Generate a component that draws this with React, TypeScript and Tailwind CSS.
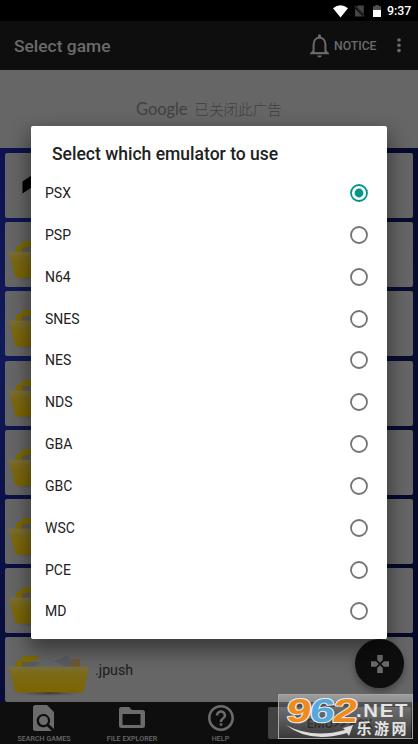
const systems = ['PSX', 'PSP', 'N64', 'SNES', 'NES', 'NDS', 'GBA', 'GBC', 'WSC', 'PCE', 'MD'];

const rows = ['up', '', '', '', '', '', '', '.jpush'];

function StatusBar() {
  return (
    <div className="flex h-[21px] items-center justify-end bg-black pr-[7px] pt-[1px] text-white">
      <svg className="h-[13px] w-[15px]" viewBox="0 0 15 13">
        <path d="M0 3.2Q7.5-2.5 15 3.2L7.5 12.5Z" fill="#fff" />
      </svg>
      <svg className="ml-[6px] h-[12px] w-[11px]" viewBox="0 0 11 12">
        <path d="M4 .5H9.8V9L2.6 1.8ZM1 3.5L9 11.5H1Z" fill="#454545" />
        <path d="M.3 .5L10.7 11.5" stroke="#454545" strokeWidth="1" />
      </svg>
      <svg className="ml-[8px] h-[12px] w-[8px]" viewBox="0 0 8 12">
        <path d="M2.3 0h3.4v1.2H8V5H0V1.2h2.3Z" fill="#505050" />
        <path d="M0 5h8v7H0Z" fill="#fff" />
      </svg>
      <span className="ml-[6.5px] w-[24px] whitespace-nowrap text-[12.4px] font-medium leading-none">9:37</span>
    </div>
  );
}

function AppBar() {
  return (
    <header className="flex h-[49px] items-center bg-[#0e0e0e] pl-[14px] pr-[17px] text-[#6b6b6b]">
      <h1 className="flex-1 pt-[2px] text-[17.4px] font-medium leading-none">Select game</h1>
      <svg className="mr-[1px] h-[24px] w-[19px]" viewBox="0 0 19 24">
        <path d="M3.6 18V10.5C3.6 6.5 6 3.7 9.5 3.7s5.9 2.8 5.9 6.8V18" fill="none" stroke="#6b6b6b" strokeWidth="2" />
        <path d="M8 1.8a1.5 1.5 0 0 1 3 0V4H8ZM0 20.2v-1l2.8-2.7h13.4L19 19.2v1ZM7.3 21.4h4.4a2.2 2 0 0 1-4.4 0Z" fill="#6b6b6b" />
        <path d="M4.6 16h9.8v2.1H4.6Z" fill="#0e0e0e" />
      </svg>
      <span className="ml-[4px] w-[43px] whitespace-nowrap pt-[1px] text-[12.2px] font-medium leading-none">NOTICE</span>
      <svg className="ml-[20px] h-[15px] w-[4px]" viewBox="0 0 4 15">
        <circle cx="2" cy="2" r="1.8" fill="#6b6b6b" />
        <circle cx="2" cy="7.3" r="1.8" fill="#6b6b6b" />
        <circle cx="2" cy="12.6" r="1.8" fill="#6b6b6b" />
      </svg>
    </header>
  );
}

function Folder() {
  return (
    <svg className="mb-[3px] h-[44px] w-[82px] self-end" viewBox="0 0 82 44">
      <defs>
        <linearGradient id="front" x1="0" y1="0" x2="0" y2="1">
          <stop offset="0" stopColor="#7c703c" />
          <stop offset=".3" stopColor="#7b6a16" />
          <stop offset="1" stopColor="#7c6500" />
        </linearGradient>
        <radialGradient id="ground">
          <stop offset="0" stopColor="#292929" />
          <stop offset="1" stopColor="#666" stopOpacity="0" />
        </radialGradient>
      </defs>
      <ellipse cx="40" cy="37.5" rx="38" ry="4.5" fill="url(#ground)" />
      <path d="M7 12V6l5-1 2-4h14l2 4h-8v7Z" fill="#7c6b04" />
      <path d="M13 7h17v5H13Z" fill="#625c46" />
      <path d="M62 4h9v8h-9Z" fill="#6e5a34" />
      <path d="M13 12L22 7l16 2L59 0l5 12Z" fill="#595d62" />
      <path d="M29 9l12-5 16 8H25Z" fill="#62666b" />
      <path d="M0 11.5l8 .3h62l10-.3-5 24q-.7 2-3 2H8.5q-2 0-2.7-2Z" fill="url(#front)" />
    </svg>
  );
}

function GameList() {
  return (
    <main className="flex h-[554px] flex-col gap-[4.2px] bg-[linear-gradient(90deg,transparent_50%,rgba(2,6,25,0.65)_100%),linear-gradient(180deg,#0d1250_0%,#111a5a_35%,#0c1148_65%,#080c38_100%)] px-[5px] pt-[5px]">
      {rows.map((name, i) => (
        <div key={i} className="flex h-[65px] w-[408px] shrink-0 items-center rounded-[2px] bg-[#666] pl-[3.5px]">
          {name === 'up' ? (
            <svg className="h-[46px] w-[82px]" viewBox="0 0 82 46">
              <path d="M13.5 18.5L35 4l20 14v12L35 16 13.5 30.5Z" fill="#000" />
            </svg>
          ) : (
            <Folder />
          )}
          <span className="ml-[4.5px] pt-[1px] text-[14.2px] leading-none text-[#1b1b1b]">{name === 'up' ? '' : name}</span>
        </div>
      ))}
    </main>
  );
}

function BottomBar() {
  return (
    <nav className="flex h-[42px] bg-[#0e0e0e] text-[7.1px] font-medium leading-none text-[#6b6b6b]">
      <div className="flex w-[88px] flex-col items-center pt-[3px]">
        <svg className="h-[26px] w-[22px]" viewBox="0 0 22 26">
          <path d="M2.5 0H14l7 7v17L16 19.3a6.7 6.7 0 1 0-2 2l4.8 4.7H2.5Q0 26 0 23.5V2.5Q0 0 2.5 0Z" fill="#6b6b6b" />
          <circle cx="10.5" cy="15.5" r="4.5" fill="#6b6b6b" />
        </svg>
        <span className="mt-[4px] whitespace-nowrap">SEARCH GAMES</span>
      </div>
      <div className="flex w-[88px] flex-col items-center pt-[5px]">
        <svg className="h-[22px] w-[26px]" viewBox="0 0 26 22">
          <path fillRule="evenodd" d="M2.5 0H10l3 3h10.5Q26 3 26 5.5v13Q26 21 23.5 21h-21Q0 21 0 18.5v-16Q0 0 2.5 0ZM3.5 7v11h18V7Z" fill="#6b6b6b" />
        </svg>
        <span className="mt-[6px] whitespace-nowrap text-[7.2px]">FILE EXPLORER</span>
      </div>
      <div className="flex w-[89px] flex-col items-center pt-[3px]">
        <svg className="h-[26px] w-[26px]" viewBox="2 2 20 20">
          <path d="M11 18h2v-2h-2v2Zm1-16C6.48 2 2 6.48 2 12s4.48 10 10 10 10-4.48 10-10S17.52 2 12 2Zm0 18c-4.41 0-8-3.59-8-8s3.59-8 8-8 8 3.59 8 8-3.59 8-8 8Zm0-14c-2.21 0-4 1.79-4 4h2c0-1.1.9-2 2-2s2 .9 2 2c0 2-3 1.75-3 5h2c0-2.25 3-2.5 3-5 0-2.21-1.79-4-4-4Z" fill="#6b6b6b" />
        </svg>
        <span className="mt-[4px]">HELP</span>
      </div>
      <div className="ml-[3px] mt-[5px] flex h-[32px] w-[143px] items-center justify-center rounded-[2px] bg-[#424242] pt-[2px] text-[12.5px] text-[#111]">
        EMU&gt;&gt; PSX
      </div>
    </nav>
  );
}

function Dialog() {
  return (
    <section className="absolute left-[31px] top-[126px] h-[513px] w-[356px] rounded-[2px] bg-white pt-[18px] shadow-[0_9px_20px_3px_rgba(0,0,0,0.42)]">
      <h2 className="pl-[21px] text-[17.55px] font-medium leading-[20px] text-[#212121]">Select which emulator to use</h2>
      <ul className="mt-[8.2px]">
        {systems.map((name, i) => (
          <li key={name} className="flex h-[41.84px] items-center justify-between pl-[14px] pr-[19px] text-[14px] text-[#212121]">
            <span className="leading-none">{name}</span>
            <svg className="h-[18px] w-[18px]" viewBox="0 0 18 18">
              <circle cx="9" cy="9" r="8" fill="none" strokeWidth="1.8" stroke={i === 0 ? '#009688' : '#747474'} />
              {i === 0 && <circle cx="9" cy="9" r="4.4" fill="#009688" />}
            </svg>
          </li>
        ))}
      </ul>
    </section>
  );
}

function Watermark() {
  return (
    <svg className="absolute left-[278px] top-[694px] h-[45px] w-[135px] overflow-visible" viewBox="0 0 135 45">
      <defs>
        <linearGradient id="plate" x1="0" y1="0" x2="0" y2="1">
          <stop offset="0" stopColor="#fff" stopOpacity=".36" />
          <stop offset=".55" stopColor="#999" stopOpacity=".3" />
          <stop offset="1" stopColor="#222" stopOpacity=".3" />
        </linearGradient>
      </defs>
      <rect x=".5" y=".5" width="134" height="44" fill="url(#plate)" stroke="#a5a5a5" strokeWidth="1" />
      <path d="M8 31Q34 45 67 36L65 34l10-3-4 11-2-3Q32 50 8 31Z" fill="#ddd" />
      <g transform="translate(7.5 27.5) skewX(-7)" fontFamily="Liberation Sans, sans-serif" fontWeight="700" fontSize="33" stroke="#eee" strokeWidth="2" paintOrder="stroke" strokeLinejoin="round">
        <text x="0" y="0" textLength="24.5" lengthAdjust="spacingAndGlyphs" fill="#ef8b1b">9</text>
        <text x="23.5" y="0" textLength="24.5" lengthAdjust="spacingAndGlyphs" fill="#55a9df">6</text>
        <text x="46.5" y="0" textLength="24.5" lengthAdjust="spacingAndGlyphs" fill="#ef8b1b">2</text>
      </g>
      <text x="78" y="22.8" fontFamily="Liberation Sans, sans-serif" fontWeight="700" fontSize="18.5" fill="#e4e4e4" textLength="53" lengthAdjust="spacingAndGlyphs" letterSpacing="1.5">.NET</text>
      <text x="78.5" y="40" textLength="50" lengthAdjust="spacing" fontFamily="Noto Sans CJK SC, sans-serif" fontWeight="700" fontSize="15" fill="#e4e4e4">乐游网</text>
    </svg>
  );
}

export default function App() {
  return (
    <div className="relative h-[744px] w-[418px] overflow-hidden bg-black font-[Roboto,'Noto_Sans_CJK_SC',sans-serif]">
      <StatusBar />
      <AppBar />
      <div className="flex h-[78px] items-center justify-center bg-[#666] text-[#414141]">
        <span className="font-[Lato,sans-serif] text-[16.5px] leading-none tracking-[-0.1px]">Google</span>
        <span className="ml-[7px] font-['Noto_Sans_CJK_SC',sans-serif] text-[14.6px] font-light leading-none">已关闭此广告</span>
      </div>
      <GameList />
      <BottomBar />
      <button className="absolute left-[355px] top-[639px] flex size-[49px] items-center justify-center rounded-full bg-[#0e0e0e] shadow-[0_4px_7px_rgba(0,0,0,0.35)]">
        <svg className="size-[18px]" viewBox="0 0 18 18">
          <path d="M6.2 0h5.6v5L9 7.8 6.2 5ZM6.2 18h5.6v-5L9 10.2 6.2 13ZM0 6.2v5.6h5L7.8 9 5 6.2ZM18 6.2v5.6h-5L10.2 9 13 6.2Z" fill="#6b6b6b" />
        </svg>
      </button>
      <Dialog />
      <Watermark />
    </div>
  );
}
